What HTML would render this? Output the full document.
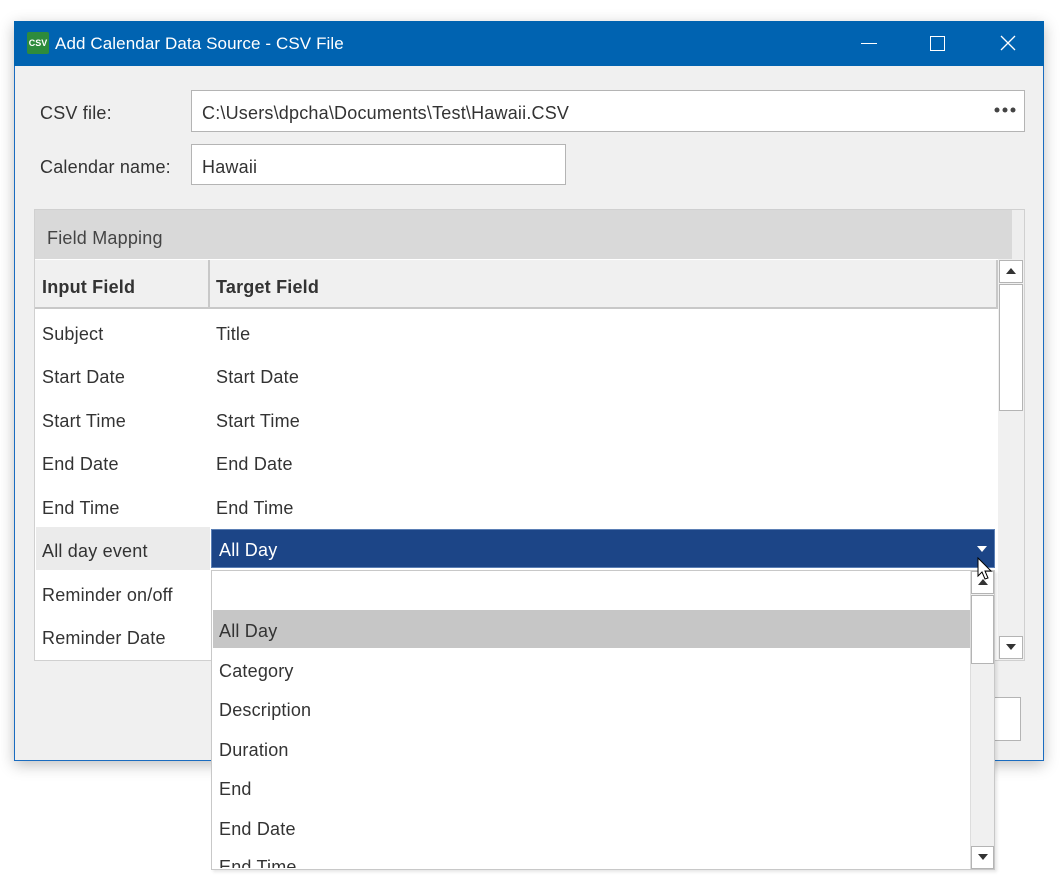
<!DOCTYPE html>
<html><head><style>
*{box-sizing:border-box;margin:0;padding:0}
body{width:1063px;height:882px;background:#fff;position:relative;overflow:hidden;font-family:"Liberation Sans",sans-serif;font-size:18px;letter-spacing:0.2px;color:#333}
.a{position:absolute}
.t{position:absolute;white-space:nowrap}
</style></head><body>
<div class="a" style="left:14px;top:21px;width:1030px;height:740px;background:#f0f0f0;border:1px solid #1a6cc0;box-shadow:0 4px 14px rgba(0,0,0,.25)"></div>
<div class="a" style="left:14px;top:21px;width:1030px;height:45px;background:#0063b1"></div>
<div class="a" style="left:27px;top:32px;width:22px;height:22px;background:#2e8b3c;border-radius:2px;color:#fff;font-size:9px;font-weight:bold;text-align:center;line-height:22px;letter-spacing:0">CSV</div>
<div class="t" style="left:55px;top:34px;color:#fff;font-size:17px;letter-spacing:0.1px">Add Calendar Data Source - CSV File</div>
<div class="a" style="left:861px;top:43px;width:16px;height:1px;background:#fff"></div>
<div class="a" style="left:930px;top:36px;width:15px;height:15px;border:1px solid #fff"></div>
<svg class="a" style="left:1000px;top:35px" width="16" height="16"><path d="M1 1L15 15M15 1L1 15" stroke="#fff" stroke-width="1.3"/></svg>

<div class="t" style="left:40px;top:103px">CSV file:</div>
<div class="a" style="left:191px;top:90px;width:834px;height:42px;background:#fff;border:1px solid #b4b4b4"></div>
<div class="t" style="left:202px;top:103px">C:\Users\dpcha\Documents\Test\Hawaii.CSV</div>
<svg class="a" style="left:994px;top:106px" width="24" height="8"><circle cx="3" cy="4" r="2.5" fill="#444"/><circle cx="11" cy="4" r="2.5" fill="#444"/><circle cx="19" cy="4" r="2.5" fill="#444"/></svg>
<div class="t" style="left:40px;top:157px">Calendar name:</div>
<div class="a" style="left:191px;top:144px;width:375px;height:41px;background:#fff;border:1px solid #b4b4b4"></div>
<div class="t" style="left:202px;top:157px">Hawaii</div>

<div class="a" style="left:34px;top:209px;width:991px;height:452px;border:1px solid #d0d0d0;background:#fff"></div>
<div class="a" style="left:35px;top:210px;width:977px;height:49px;background:#d9d9d9"></div>
<div class="a" style="left:1012px;top:210px;width:12px;height:49px;background:#eee"></div>
<div class="t" style="left:47px;top:228px;color:#444">Field Mapping</div>
<div class="a" style="left:35px;top:260px;width:963px;height:49px;background:#f0f0f0;border-bottom:2px solid #c8c8c8;border-right:2px solid #c8c8c8"></div>
<div class="a" style="left:208px;top:260px;width:2px;height:49px;background:#c8c8c8"></div>
<div class="t" style="left:42px;top:277px;font-weight:bold">Input Field</div>
<div class="t" style="left:216px;top:277px;font-weight:bold">Target Field</div>
<div class="a" style="left:998px;top:259px;width:26px;height:401px;background:#f0f0f0"></div>
<div class="a" style="left:999px;top:260px;width:24px;height:23px;background:#fff;border:1px solid #b4b4b4"></div>
<svg class="a" style="left:1005px;top:266px" width="12" height="10"><path d="M1 8L6 2L11 8Z" fill="#333"/></svg>
<div class="a" style="left:999px;top:284px;width:24px;height:127px;background:#fff;border:1px solid #b4b4b4"></div>
<div class="a" style="left:999px;top:636px;width:24px;height:23px;background:#fff;border:1px solid #b4b4b4"></div>
<svg class="a" style="left:1005px;top:642px" width="12" height="10"><path d="M1 2L6 8L11 2Z" fill="#333"/></svg>

<div class="t" style="left:42px;top:324px">Subject</div><div class="t" style="left:216px;top:324px">Title</div>
<div class="t" style="left:42px;top:367px">Start Date</div><div class="t" style="left:216px;top:367px">Start Date</div>
<div class="t" style="left:42px;top:411px">Start Time</div><div class="t" style="left:216px;top:411px">Start Time</div>
<div class="t" style="left:42px;top:454px">End Date</div><div class="t" style="left:216px;top:454px">End Date</div>
<div class="t" style="left:42px;top:498px">End Time</div><div class="t" style="left:216px;top:498px">End Time</div>
<div class="a" style="left:36px;top:527px;width:174px;height:43px;background:#ebebeb"></div>
<div class="t" style="left:42px;top:541px">All day event</div>
<div class="a" style="left:211px;top:529px;width:784px;height:39px;background:#1c4587;border:1px solid #5b7fb5"></div>
<div class="t" style="left:219px;top:540px;color:#fff">All Day</div>
<svg class="a" style="left:976px;top:544px" width="12" height="10"><path d="M1 2L6 8L11 2Z" fill="#fff"/></svg>
<div class="t" style="left:42px;top:585px">Reminder on/off</div>
<div class="t" style="left:42px;top:628px">Reminder Date</div>

<div class="a" style="left:860px;top:697px;width:161px;height:44px;background:#fff;border:1px solid #b4b4b4"></div>

<div class="a" style="left:211px;top:570px;width:784px;height:300px;background:#fff;border:1px solid #c8c8c8;box-shadow:2px 2px 3px rgba(0,0,0,.1)"></div>
<div class="a" style="left:213px;top:610px;width:757px;height:38px;background:#c6c6c6"></div>
<div class="t" style="left:219px;top:621px">All Day</div>
<div class="t" style="left:219px;top:661px">Category</div>
<div class="t" style="left:219px;top:700px">Description</div>
<div class="t" style="left:219px;top:740px">Duration</div>
<div class="t" style="left:219px;top:779px">End</div>
<div class="t" style="left:219px;top:819px">End Date</div>
<div class="t" style="left:219px;top:856px;height:12px;overflow:hidden;line-height:22px">End Time</div>
<div class="a" style="left:970px;top:571px;width:24px;height:298px;background:#f0f0f0;border-left:1px solid #ddd"></div>
<div class="a" style="left:971px;top:571px;width:23px;height:23px;background:#fff;border:1px solid #b4b4b4"></div>
<svg class="a" style="left:977px;top:577px" width="12" height="10"><path d="M1 8L6 2L11 8Z" fill="#333"/></svg>
<div class="a" style="left:971px;top:595px;width:23px;height:69px;background:#fff;border:1px solid #b4b4b4"></div>
<div class="a" style="left:971px;top:846px;width:23px;height:23px;background:#fff;border:1px solid #b4b4b4"></div>
<svg class="a" style="left:977px;top:852px" width="12" height="10"><path d="M1 2L6 8L11 2Z" fill="#333"/></svg>
<svg class="a" style="left:977px;top:557px" width="20" height="28"><path d="M1 1L1 19L5 15L8 22L11 21L8 14L14 14Z" fill="#fff" stroke="#000" stroke-width="1"/></svg>
</body></html>
